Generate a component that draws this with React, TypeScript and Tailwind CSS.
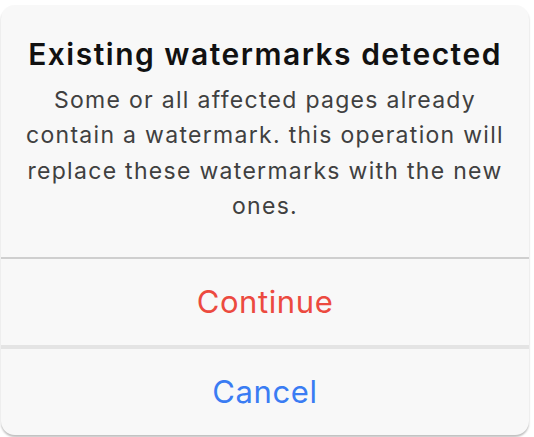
const lines = [
  "Some or all affected pages already",
  "contain a watermark. this operation will",
  "replace these watermarks with the new",
  "ones.",
];

export default function App() {
  return (
    <div className="h-[437px] w-[534px] overflow-hidden bg-white font-['Inter',sans-serif]">
      <div className="ml-px mt-[5px] flex h-[430px] w-[528px] flex-col overflow-hidden rounded-[14px] bg-[#f8f8f8] shadow-[0_2px_2px_rgba(0,0,0,0.25)]">
        <div className="flex h-[252px] flex-col items-center px-2 pt-[29px] text-center">
          <h2 className="whitespace-nowrap text-[30px] font-semibold leading-[40px] tracking-[1.5px] text-[#111]">
            Existing watermarks detected
          </h2>
          <p className="mt-[9px] text-[23px] leading-[35.3px] tracking-[1.3px] text-[#404040]">
            {lines.map((l) => (
              <span key={l} className="block whitespace-nowrap">
                {l}
              </span>
            ))}
          </p>
        </div>
        <div className="h-[2px] bg-[#cfcfcf]" />
        <button className="flex h-[86px] items-center justify-center text-[31px] tracking-[0.6px] text-[#ec4a3f]">
          Continue
        </button>
        <div className="h-[4px] bg-[#e4e4e4]" />
        <button className="flex h-[86px] items-center justify-center text-[31px] tracking-[0.6px] text-[#3a7cf3]">
          Cancel
        </button>
      </div>
    </div>
  );
}
